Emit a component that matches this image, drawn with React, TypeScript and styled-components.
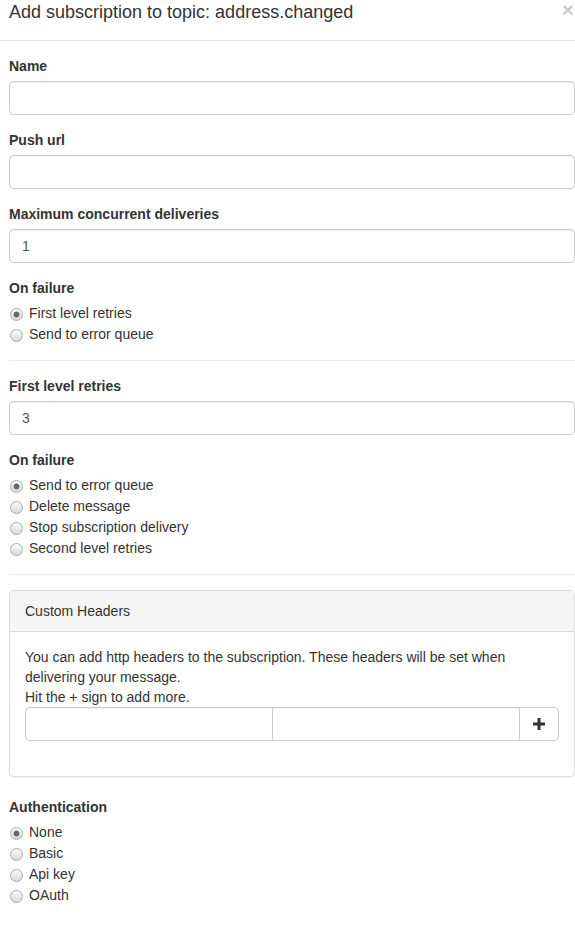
import styled, { createGlobalStyle } from "styled-components";

const GlobalStyle = createGlobalStyle`
  html, body {
    margin: 0;
    padding: 0;
    background: #fff;
  }
  body {
    font-family: "Liberation Sans", Arial, Helvetica, sans-serif;
    font-size: 14px;
    line-height: 1.42857;
    color: #333;
    overflow: hidden;
  }
  * {
    box-sizing: border-box;
  }
`;

const Modal = styled.div`
  width: 575px;
  background: #fff;
`;

const Header = styled.div`
  display: flex;
  justify-content: space-between;
  align-items: flex-start;
  padding: 0 0 15px 9px;
  border-bottom: 1px solid #e5e5e5;
`;

const Title = styled.h4`
  margin: -1px 0 0;
  font-size: 18px;
  font-weight: 500;
  line-height: 26px;
  color: #333;
`;

const Close = styled.button`
  border: 0;
  background: transparent;
  padding: 0;
  margin: -1px 1px 0 0;
  font-family: "Liberation Sans", Arial, sans-serif;
  font-size: 21px;
  font-weight: bold;
  line-height: 1;
  color: #000;
  opacity: 0.2;
  cursor: pointer;
`;

const Body = styled.div`
  padding: 15px 0 20px 9px;
`;

const FormGroup = styled.div`
  margin-bottom: 15px;
`;

const Label = styled.label`
  display: block;
  font-weight: bold;
  line-height: 20px;
  margin-bottom: 5px;
`;

const Input = styled.input<{ $flat?: "left" | "middle" }>`
  display: block;
  width: 100%;
  height: 34px;
  padding: 6px 12px;
  font-family: inherit;
  font-size: 14px;
  color: #555;
  background: #fff;
  border: 1px solid #ccc;
  border-radius: ${(p) =>
    p.$flat === "left" ? "4px 0 0 4px" : p.$flat === "middle" ? "0" : "4px"};
  box-shadow: inset 0 1px 1px rgba(0, 0, 0, 0.075);
  outline: none;
`;

const RadioRow = styled.label`
  display: flex;
  align-items: center;
  height: 21px;
  padding-top: 1px;
  cursor: pointer;
`;

const Radio = styled.input.attrs({ type: "radio" })`
  appearance: none;
  width: 13px;
  height: 13px;
  margin: 0 6px 0 1px;
  border: 1px solid #ababab;
  border-radius: 50%;
  background: linear-gradient(#fafafa, #dadada);
  flex-shrink: 0;

  &:checked {
    background: radial-gradient(circle, #666 0 2.6px, transparent 3.3px),
      linear-gradient(#fafafa, #dadada);
  }
`;

const Divider = styled.hr`
  margin: 0 0 15px;
  border: 0;
  border-top: 1px solid #eee;
`;

const Panel = styled.div`
  border: 1px solid #ddd;
  border-radius: 4px;
  margin-bottom: 20px;
  box-shadow: 0 1px 1px rgba(0, 0, 0, 0.05);
`;

const PanelHeading = styled.div`
  padding: 10px 15px;
  background: #f5f5f5;
  border-bottom: 1px solid #ddd;
  border-radius: 3px 3px 0 0;
  line-height: 20px;
`;

const PanelBody = styled.div`
  padding: 15px;
`;

const Help = styled.p`
  margin: 0;
  line-height: 20px;
`;

const InputGroup = styled.div`
  display: flex;
  margin-bottom: 20px;
`;

const AddButton = styled.button`
  flex: 0 0 40px;
  height: 34px;
  margin-left: -1px;
  display: flex;
  align-items: center;
  justify-content: center;
  background: #fff;
  border: 1px solid #ccc;
  border-radius: 0 4px 4px 0;
  cursor: pointer;
`;

const radioGroups = {
  first: ["First level retries", "Send to error queue"],
  second: [
    "Send to error queue",
    "Delete message",
    "Stop subscription delivery",
    "Second level retries",
  ],
  auth: ["None", "Basic", "Api key", "OAuth"],
};

const RadioList = ({ name, options }: { name: string; options: string[] }) => (
  <div>
    {options.map((opt, i) => (
      <RadioRow key={opt}>
        <Radio name={name} defaultChecked={i === 0} />
        {opt}
      </RadioRow>
    ))}
  </div>
);

const App = () => {
  return (
    <>
      <GlobalStyle />
      <Modal>
        <Header>
          <Title>Add subscription to topic: address.changed</Title>
          <Close aria-label="Close">×</Close>
        </Header>
        <Body>
          <FormGroup>
            <Label>Name</Label>
            <Input type="text" />
          </FormGroup>
          <FormGroup>
            <Label>Push url</Label>
            <Input type="text" />
          </FormGroup>
          <FormGroup>
            <Label>Maximum concurrent deliveries</Label>
            <Input type="text" defaultValue="1" />
          </FormGroup>
          <FormGroup>
            <Label>On failure</Label>
            <RadioList name="failure1" options={radioGroups.first} />
          </FormGroup>

          <Divider />

          <FormGroup>
            <Label>First level retries</Label>
            <Input type="text" defaultValue="3" />
          </FormGroup>
          <FormGroup>
            <Label>On failure</Label>
            <RadioList name="failure2" options={radioGroups.second} />
          </FormGroup>

          <Divider />

          <Panel>
            <PanelHeading>Custom Headers</PanelHeading>
            <PanelBody>
              <Help>
                You can add http headers to the subscription. These headers will be set when
                <br />
                delivering your message.
                <br />
                Hit the + sign to add more.
              </Help>
              <InputGroup>
                <Input type="text" $flat="left" />
                <Input type="text" $flat="middle" style={{ marginLeft: -1 }} />
                <AddButton aria-label="Add header">
                  <svg width="12" height="12" viewBox="0 0 12 12">
                    <path d="M4.5 0h3v4.5H12v3H7.5V12h-3V7.5H0v-3h4.5z" fill="#333" />
                  </svg>
                </AddButton>
              </InputGroup>
            </PanelBody>
          </Panel>

          <FormGroup>
            <Label>Authentication</Label>
            <RadioList name="auth" options={radioGroups.auth} />
          </FormGroup>
        </Body>
      </Modal>
    </>
  );
};

export default App;
